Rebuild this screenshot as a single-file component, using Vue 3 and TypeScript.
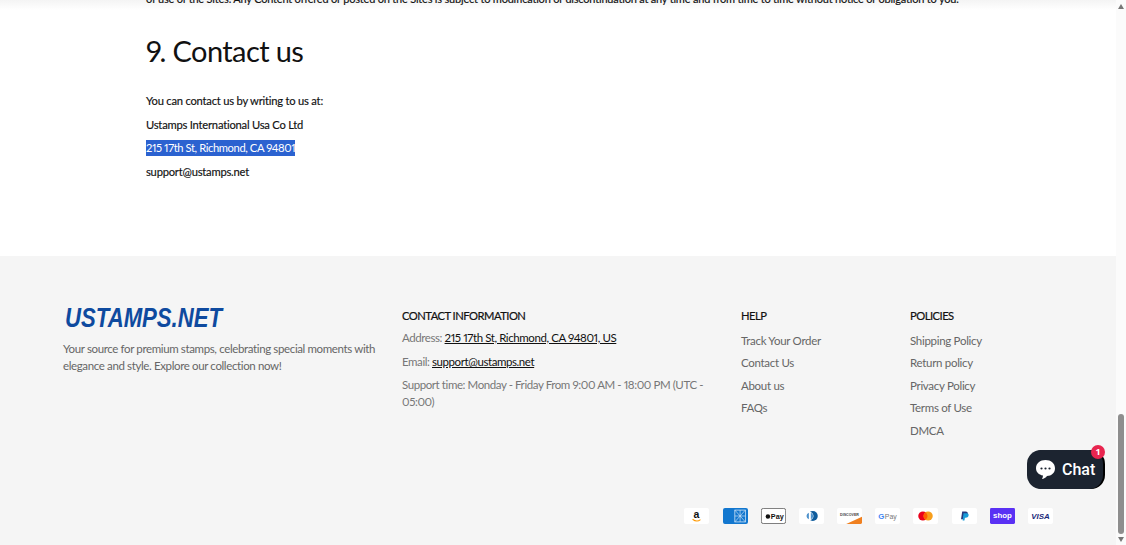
<script setup lang="ts">
const help: string[] = ['Track Your Order', 'Contact Us', 'About us', 'FAQs']
const policies: string[] = ['Shipping Policy', 'Return policy', 'Privacy Policy', 'Terms of Use', 'DMCA']
</script>

<template>
  <div class="page">
    <div class="content">
      <main class="article">
        <p class="clipped">of use of the Sites. Any Content offered or posted on the Sites is subject to modification or discontinuation at any time and from time to time without notice or obligation to you.</p>
        <h2>9. Contact us</h2>
        <p class="line">You can contact us by writing to us at:</p>
        <p class="line">Ustamps International Usa Co Ltd</p>
        <p class="line"><span class="selected">215 17th St, Richmond, CA 94801</span></p>
        <p class="line">support@ustamps.net</p>
      </main>
      <footer class="footer">
        <div class="columns">
          <div class="brand">
            <div class="logo">USTAMPS.NET</div>
            <p>Your source for premium stamps, celebrating special moments with elegance and style. Explore our collection now!</p>
          </div>
          <div class="info">
            <h3>CONTACT INFORMATION</h3>
            <p>Address: <a>215 17th St, Richmond, CA 94801, US</a></p>
            <p>Email: <a>support@ustamps.net</a></p>
            <p>Support time: Monday - Friday From 9:00 AM - 18:00 PM (UTC -<br />05:00)</p>
          </div>
          <div class="links">
            <h3>HELP</h3>
            <span v-for="item in help" :key="item">{{ item }}</span>
          </div>
          <div class="links">
            <h3>POLICIES</h3>
            <span v-for="item in policies" :key="item">{{ item }}</span>
          </div>
        </div>
        <div class="payments">
          <svg class="pay" viewBox="0 0 38 24"><rect width="38" height="24" rx="3" fill="#fff"/><text x="19" y="14.500" text-anchor="middle" class="t-amazon">a</text><path d="M13 17c4 3 9 3 12 .5" stroke="#f90" stroke-width="1.600" fill="none"/></svg>
          <svg class="pay" viewBox="0 0 38 24"><rect width="38" height="24" rx="3" fill="#1277cf"/><rect x="18" y="3" width="16" height="18" fill="none" stroke="#cfe4f7" stroke-width="1.200"/><path d="M18 3l16 18M34 3L18 21M26 3v18M18 12h16" stroke="#cfe4f7" stroke-width="1"/></svg>
          <svg class="pay" viewBox="0 0 38 24"><rect x=".5" y=".5" width="37" height="23" rx="3" fill="#fff" stroke="#333"/><circle cx="10.500" cy="12.800" r="3.400" fill="#111"/><text x="15" y="16.500" class="t-apple">Pay</text></svg>
          <svg class="pay" viewBox="0 0 38 24"><rect width="38" height="24" rx="3" fill="#fff"/><circle cx="21" cy="12" r="7.500" fill="#0f5c9c"/><circle cx="15.500" cy="12" r="6.500" fill="#fff"/><path d="M15 7.200a5 5 0 0 0 0 9.600zM18 7.200a5 5 0 0 1 0 9.600z" fill="#4f92cc"/></svg>
          <svg class="pay" viewBox="0 0 38 24"><rect width="38" height="24" rx="3" fill="#fff"/><path d="M14 24 38 13v9a2 2 0 0 1-2 2z" fill="#f08020"/><text x="19" y="11.500" text-anchor="middle" class="t-disc">DISCOVER</text></svg>
          <svg class="pay" viewBox="0 0 38 24"><rect width="38" height="24" rx="3" fill="#fff"/><text x="5" y="16" class="t-g">G</text><text x="15" y="16" class="t-gpay">Pay</text></svg>
          <svg class="pay" viewBox="0 0 38 24"><rect width="38" height="24" rx="3" fill="#fff"/><circle cx="15" cy="12" r="7" fill="#eb001b"/><circle cx="23" cy="12" r="7" fill="#f79e1b"/><path d="M19 6.200a7 7 0 0 1 0 11.600 7 7 0 0 1 0-11.600z" fill="#ff5f00"/></svg>
          <svg class="pay" viewBox="0 0 38 24"><rect width="38" height="24" rx="3" fill="#fff"/><path d="M15.500 5h5.200c2.600 0 3.800 1.500 3.300 3.700-.5 2.400-2.300 3.600-4.600 3.600h-1.600l-.8 4.700h-3.300z" fill="#253b80"/><path d="M17.500 8h4.800c2 0 3.400 1.300 2.900 3.300-.5 2.300-2.200 3.400-4.300 3.400h-1.300l-.7 4.300h-2.700z" fill="#179bd7"/></svg>
          <svg class="pay" viewBox="0 0 38 24"><rect width="38" height="24" rx="2" fill="#5a31f4"/><text x="19" y="15.500" text-anchor="middle" class="t-shop">shop</text></svg>
          <svg class="pay" viewBox="0 0 38 24"><rect width="38" height="24" rx="3" fill="#fff"/><text x="19" y="16" text-anchor="middle" class="t-visa">VISA</text></svg>
        </div>
      </footer>
    </div>
    <div class="scrollbar">
      <span class="arrow up"></span>
      <div class="track"><div class="thumb"></div></div>
      <span class="arrow down"></span>
    </div>
    <div class="chat">
      <svg width="21" height="21" viewBox="0 0 21 21"><path d="M10.500 1C15.800 1 20 4.200 20 9.200c0 4.600-3.600 7.600-8 7.800-1.200 1.600-3.200 3-5 3 .6-1 1-2.300 1-3.500C3.800 15.700 1 13 1 9.200 1 4.200 5.200 1 10.500 1z" fill="#fff"/><circle cx="6.500" cy="9.500" r="1.100" fill="#1c2430"/><circle cx="10.500" cy="9.500" r="1.100" fill="#1c2430"/><circle cx="14.500" cy="9.500" r="1.100" fill="#1c2430"/></svg>
      <span>Chat</span>
      <b class="badge">1</b>
    </div>
  </div>
</template>

<style>
html, body { margin: 0; height: 100%; overflow: hidden; background: #fff; }
</style>

<style scoped>
.page {
  position: relative;
  display: flex;
  width: 1126px;
  height: 545px;
  overflow: hidden;
  font-family: Lato, "Noto Sans", sans-serif;
  font-variant-numeric: proportional-nums;
  color: #111;
}
.content { width: 1116px; flex: none; }
.article {
  height: 256px;
  box-sizing: border-box;
  padding: 0 146px;
  overflow: hidden;
  background: linear-gradient(#f4f4f4, #fff 10px);
}
.clipped {
  margin: -10px 0 0;
  font-size: 11px;
  line-height: 18px;
  white-space: nowrap;
  letter-spacing: -.2px;
  -webkit-text-stroke: .15px #111;
}
h2 {
  margin: 23px 0 21px;
  font-size: 29px;
  line-height: 40px;
  font-weight: 400;
  letter-spacing: -.6px;
}
.line { margin: 0 0 5.700px; font-size: 11.200px; line-height: 18px; letter-spacing: -.22px; -webkit-text-stroke: .15px #111; }
.selected { background: #2b62d0; color: #fff; display: inline-block; line-height: 16px; letter-spacing: -.4px; -webkit-text-stroke: 0; }
.footer { height: 289px; background: #f5f5f5; box-sizing: border-box; padding: 50px 63px 0; }
.columns { display: grid; grid-template-columns: 339px 339px 169px 1fr; height: 201px; }
.logo {
  font-family: "Liberation Sans", Arial, sans-serif;
  font-style: italic;
  font-weight: 700;
  font-size: 27px;
  line-height: 24px;
  color: #0e4a9f;
  transform: scaleX(.82);
  transform-origin: left center;
  margin: 0 0 10px 2px;
  white-space: nowrap;
}
.brand p { margin: 0; width: 320px; color: #666; font-size: 11.500px; line-height: 17px; letter-spacing: -.37px; }
h3 { margin: 0; font-size: 11.200px; line-height: 18px; font-weight: 400; color: #111; letter-spacing: -.5px; -webkit-text-stroke: .2px #111; padding-top: 1px; }
.info h3 { margin-bottom: 4px; }
.info p { margin: 0 0 7px; width: 320px; color: #777; font-size: 11.500px; line-height: 17px; letter-spacing: -.42px; }
.info p + p { margin-bottom: 6px; }
.info a { color: #111; text-decoration: underline; }
.links { display: flex; flex-direction: column; }
.links h3 { margin-bottom: 5px; }
.links span { color: #666; font-size: 11.500px; line-height: 22.400px; letter-spacing: -.3px; }
.payments { display: flex; justify-content: flex-end; gap: 13.200px; padding-top: 1px; }
.pay { width: 25px; height: 16px; flex: none; }
.t-amazon { font: 700 16px "Liberation Sans", sans-serif; fill: #111; }
.t-apple { font: 600 11px "Liberation Sans", sans-serif; fill: #111; }
.t-disc { font: 700 5.500px "Liberation Sans", sans-serif; fill: #444; }
.t-g { font: 700 12px "Liberation Sans", sans-serif; fill: #4285f4; }
.t-gpay { font: 400 10.500px "Liberation Sans", sans-serif; fill: #777; }
.t-shop { font: 700 12px "Liberation Sans", sans-serif; fill: #fff; }
.t-visa { font: italic 800 12px "Liberation Sans", sans-serif; fill: #1a2a7a; }
.scrollbar { flex: 1; display: flex; flex-direction: column; align-items: center; background: #fbfbfb; }
.arrow { width: 0; height: 0; border-left: 3.500px solid transparent; border-right: 3.500px solid transparent; flex: none; }
.up { border-bottom: 5px solid #777; margin-top: 4px; }
.down { border-top: 5px solid #777; margin-bottom: 3px; }
.track { flex: 1; width: 100%; display: flex; flex-direction: column; justify-content: flex-end; padding-bottom: 3px; }
.thumb { width: 6px; height: 120px; border-radius: 3px; background: #8e8e8e; margin: 0 auto; }
.chat {
  position: absolute;
  left: 1027px;
  top: 450px;
  width: 76px;
  height: 39px;
  border-radius: 14px;
  background: #1c2430;
  box-shadow: 2px 0 0 #000;
  color: #fff;
  display: flex;
  align-items: center;
  gap: 6px;
  padding-left: 8px;
  box-sizing: border-box;
  font: 500 16px Roboto, "Noto Sans", sans-serif;
}
.badge {
  position: absolute;
  right: -2px;
  top: -5px;
  width: 14px;
  height: 14px;
  border-radius: 50%;
  background: #e8254f;
  color: #fff;
  font: 700 9px/14px "Noto Sans", sans-serif;
  text-align: center;
}
</style>
